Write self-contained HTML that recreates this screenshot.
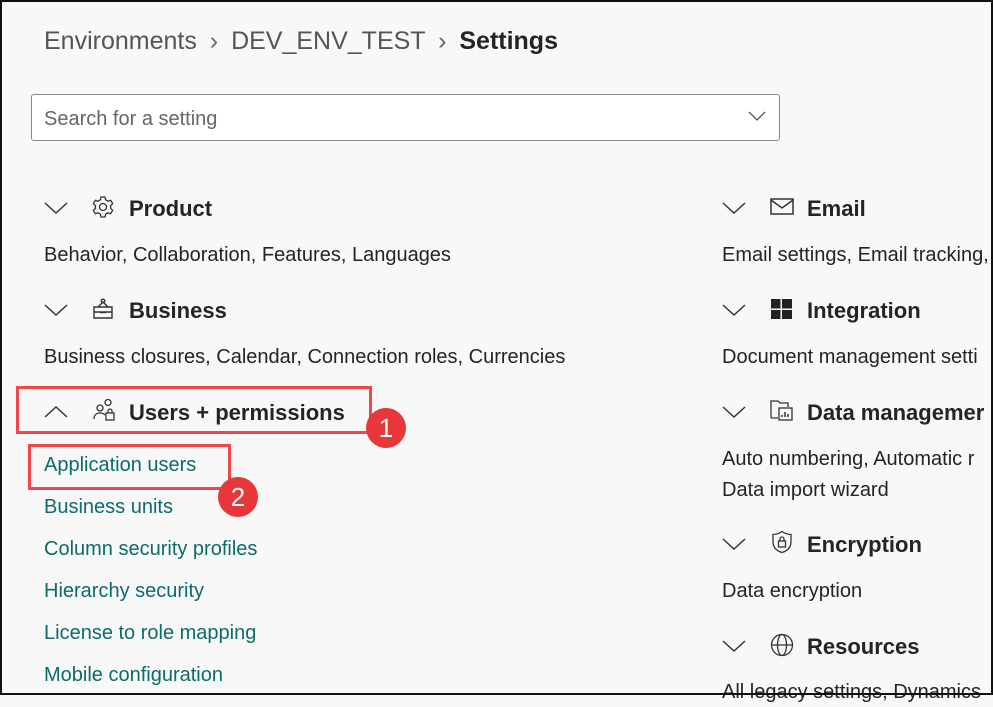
<!DOCTYPE html>
<html><head><meta charset="utf-8"><style>
html,body{margin:0;padding:0}
body{width:993px;height:695px;position:relative;overflow:hidden;background:#f8f8f8;font-family:"Liberation Sans",sans-serif;color:#242424}
.frame{position:absolute;left:0;top:0;width:989px;height:691px;border:2px solid #111}
.t{position:absolute;white-space:nowrap;line-height:30px;height:30px}
.h{font-size:22px;font-weight:bold}
.d{font-size:20px}
.l{font-size:20px;color:#0d6b6b}
.chev{position:absolute;width:24px;height:14px}
.ic{position:absolute;width:24px;height:24px}
.box{position:absolute;border:3px solid #f0474a}
.num{position:absolute;width:40px;height:40px;border-radius:50%;background:#e8373b;color:#fff;font-size:26px;text-align:center;line-height:40px}
</style></head><body>
<div class="frame"></div>
<div class="t" style="left:44px;top:25px;font-size:25px;line-height:32px;height:32px;color:#555">Environments <span style="color:#666;margin:0 6px">&#x203A;</span> DEV_ENV_TEST <span style="color:#666;margin:0 6px">&#x203A;</span> <b style="color:#242424">Settings</b></div>
<div style="position:absolute;left:31px;top:94px;width:747px;height:45px;border:1px solid #8a8a8a;border-radius:3px;background:#fff"></div>
<div class="t" style="left:44px;top:104px;font-size:20px;color:#666">Search for a setting</div>
<svg style="position:absolute;left:748px;top:110px" width="18" height="12"><path d="M1 2 L9 10 L17 2" fill="none" stroke="#555" stroke-width="1.3"/></svg>

<svg class="chev" style="left:44px;top:201px"><path d="M1 2 L12 12 L23 2" fill="none" stroke="#333" stroke-width="1.4"/></svg>
<svg class="ic" style="left:91px;top:195px" viewBox="0 0 24 24"><circle cx="12" cy="12" r="3.5" fill="none" stroke="#333" stroke-width="1.3"/><path d="M10 2h4l.6 2.8 2.4 1.4 2.7-.9 2 3.4-2.1 1.9v2.8l2.1 1.9-2 3.4-2.7-.9-2.4 1.4L14 22h-4l-.6-2.8-2.4-1.4-2.7.9-2-3.4 2.1-1.9v-2.8L2.3 8.7l2-3.4 2.7.9 2.4-1.4z" fill="none" stroke="#333" stroke-width="1.3" stroke-linejoin="round"/></svg>
<div class="t h" style="left:129px;top:194px">Product</div>
<div class="t d" style="left:44px;top:240px">Behavior, Collaboration, Features, Languages</div>

<svg class="chev" style="left:44px;top:303px"><path d="M1 2 L12 12 L23 2" fill="none" stroke="#333" stroke-width="1.4"/></svg>
<svg class="ic" style="left:91px;top:297px" viewBox="0 0 24 24"><path d="M3 10h18v11H3z M3 15h18 M7 10l5-5 5 5" fill="none" stroke="#333" stroke-width="1.4"/><circle cx="12" cy="4" r="1.8" fill="none" stroke="#333" stroke-width="1.3"/><path d="M9 15.5h6" stroke="#333" stroke-width="1.4"/></svg>
<div class="t h" style="left:129px;top:296px">Business</div>
<div class="t d" style="left:44px;top:342px">Business closures, Calendar, Connection roles, Currencies</div>

<svg class="chev" style="left:44px;top:405px"><path d="M1 12 L12 2 L23 12" fill="none" stroke="#333" stroke-width="1.4"/></svg>
<svg class="ic" style="left:92px;top:398px" viewBox="0 0 24 24"><circle cx="8" cy="10" r="3" fill="none" stroke="#333" stroke-width="1.3"/><path d="M2 21c0-4 2.5-6 6-6s4 1 5 2" fill="none" stroke="#333" stroke-width="1.3"/><circle cx="16" cy="4.5" r="3" fill="none" stroke="#333" stroke-width="1.3"/><rect x="14" y="15" width="8" height="7" fill="none" stroke="#333" stroke-width="1.3"/><path d="M16 15v-2a2 2 0 0 1 4 0v2" fill="none" stroke="#333" stroke-width="1.3"/></svg>
<div class="t h" style="left:129px;top:398px">Users + permissions</div>

<div class="t l" style="left:44px;top:450px">Application users</div>
<div class="t l" style="left:44px;top:492px">Business units</div>
<div class="t l" style="left:44px;top:534px">Column security profiles</div>
<div class="t l" style="left:44px;top:576px">Hierarchy security</div>
<div class="t l" style="left:44px;top:618px">License to role mapping</div>
<div class="t l" style="left:44px;top:660px">Mobile configuration</div>

<svg class="chev" style="left:722px;top:201px"><path d="M1 2 L12 12 L23 2" fill="none" stroke="#333" stroke-width="1.4"/></svg>
<svg class="ic" style="left:770px;top:195px" viewBox="0 0 24 24"><rect x="1" y="4" width="22" height="15" fill="none" stroke="#333" stroke-width="1.5"/><path d="M1 5l11 8 11-8" fill="none" stroke="#333" stroke-width="1.5"/></svg>
<div class="t h" style="left:807px;top:194px">Email</div>
<div class="t d" style="left:722px;top:240px">Email settings, Email tracking,</div>

<svg class="chev" style="left:722px;top:303px"><path d="M1 2 L12 12 L23 2" fill="none" stroke="#333" stroke-width="1.4"/></svg>
<svg class="ic" style="left:770px;top:297px" viewBox="0 0 24 24"><path d="M1 2h9.5v9.5H1z M12 2h10v9.5H12z M1 13h9.5v9H1z M12 13h10v9H12z" fill="#222"/></svg>
<div class="t h" style="left:807px;top:296px">Integration</div>
<div class="t d" style="left:722px;top:342px">Document management setti</div>

<svg class="chev" style="left:722px;top:405px"><path d="M1 2 L12 12 L23 2" fill="none" stroke="#333" stroke-width="1.4"/></svg>
<svg class="ic" style="left:770px;top:398px" viewBox="0 0 24 24"><path d="M1 20V3h7l2 2h8v4 M1 20h7" fill="none" stroke="#333" stroke-width="1.3"/><rect x="9" y="10" width="13" height="12" fill="none" stroke="#333" stroke-width="1.3"/><path d="M12 19v-2 M15 19v-5 M18 19v-3" stroke="#333" stroke-width="1.5"/></svg>
<div class="t h" style="left:807px;top:398px">Data managemer</div>
<div class="t d" style="left:722px;top:444px">Auto numbering, Automatic r</div>
<div class="t d" style="left:722px;top:475px">Data import wizard</div>

<svg class="chev" style="left:722px;top:537px"><path d="M1 2 L12 12 L23 2" fill="none" stroke="#333" stroke-width="1.4"/></svg>
<svg class="ic" style="left:770px;top:530px" viewBox="0 0 24 24"><path d="M12 1.5c3 2 6 3 9 3v7c0 6-4 9.5-9 11-5-1.5-9-5-9-11v-7c3 0 6-1 9-3z" fill="none" stroke="#333" stroke-width="1.3"/><rect x="8.5" y="11" width="7" height="6" fill="none" stroke="#333" stroke-width="1.3"/><path d="M10 11V9a2 2 0 0 1 4 0v2" fill="none" stroke="#333" stroke-width="1.3"/></svg>
<div class="t h" style="left:807px;top:530px">Encryption</div>
<div class="t d" style="left:722px;top:576px">Data encryption</div>

<svg class="chev" style="left:722px;top:639px"><path d="M1 2 L12 12 L23 2" fill="none" stroke="#333" stroke-width="1.4"/></svg>
<svg class="ic" style="left:770px;top:633px" viewBox="0 0 24 24"><circle cx="12" cy="12" r="10.5" fill="none" stroke="#333" stroke-width="1.3"/><ellipse cx="12" cy="12" rx="4.5" ry="10.5" fill="none" stroke="#333" stroke-width="1.3"/><path d="M1.5 12h21" stroke="#333" stroke-width="1.3"/></svg>
<div class="t h" style="left:807px;top:632px">Resources</div>
<div class="t d" style="left:722px;top:677px">All legacy settings, Dynamics</div>
<div style="position:absolute;left:0;top:693px;width:993px;height:2px;background:#111"></div>

<div class="box" style="left:16px;top:386px;width:350px;height:42px"></div>
<div class="num" style="left:366px;top:408px">1</div>
<div class="box" style="left:28px;top:444px;width:197px;height:40px"></div>
<div class="num" style="left:218px;top:477px">2</div>
</body></html>
